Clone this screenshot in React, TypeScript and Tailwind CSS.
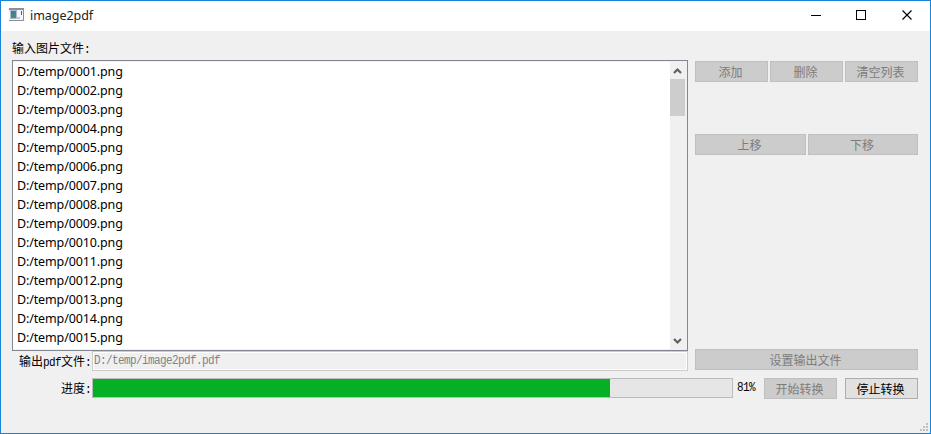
import React from "react";

const files = Array.from({ length: 15 }, (_, i) => `D:/temp/${String(i + 1).padStart(4, "0")}.png`);

function Button({ label, className, active = false }: { label: string; className: string; active?: boolean }) {
  return (
    <button
      className={`flex h-[21px] shrink-0 items-center justify-center border pt-[4px] pr-[2px] text-[12px] leading-none ${
        active ? "border-[#adadad] bg-[#e1e1e1] text-black" : "border-[#bfbfbf] bg-[#cccccc] text-[#7c7c7c]"
      } ${className}`}
    >
      <span>{label}</span>
    </button>
  );
}

function Latin({ children }: { children: string }) {
  return <span className="inline-block origin-center scale-y-[1.15] text-[11px] leading-none tracking-[-0.6px]">{children}</span>;
}

function TitleBar() {
  return (
    <header className="flex h-[30px] shrink-0 items-center bg-white">
      <svg className="mb-[3px] ml-2 shrink-0" width="15" height="13" viewBox="0 0 15 13" shapeRendering="crispEdges">
        <path d="M0 0h15v13H0z" fill="#8b9094" />
        <path d="M0 2h14v10H0z" fill="#f4f5f6" />
        <path d="M1 2h7v9H1z" fill="#a9bccb" />
        <path d="M2 3h5v7H2z" fill="#3f8d80" />
        <path d="M2 3h4v3H2z" fill="#4778a0" />
        <path d="M8 9h3v2H8z" fill="#c5c9cc" />
        <path d="M12 3h1v4h-1z" fill="#3c608c" />
      </svg>
      <h1 className="ml-[6px] font-['Noto_Sans',sans-serif] text-[12.5px] leading-none tracking-[-0.05px] text-[#222]">image2pdf</h1>
      <div className="ml-auto flex h-full items-center pr-[17px] text-black">
        <svg className="mb-[2px]" width="102" height="10" viewBox="0 0 102 10" fill="none" stroke="currentColor">
          <path d="M0 5.5h10M45.5.5h9v9h-9z" shapeRendering="crispEdges" />
          <path d="m91.5.5 9 9m0-9-9 9" strokeWidth="1.15" />
        </svg>
      </div>
    </header>
  );
}

function FileList() {
  return (
    <div className="flex h-[291px] border border-[#828790] bg-[#f0f0f0] py-px">
      <ul className="flex-1 overflow-hidden bg-white pl-1 font-['Noto_Sans',sans-serif] text-[12.5px] text-black">
        {files.map((file) => (
          <li key={file} className="h-[19px] leading-[19px] tracking-[-0.13px]">{file}</li>
        ))}
      </ul>
      <div className="mr-[2px] flex w-[15px] flex-col items-center text-[#606060]">
        <svg className="shrink-0" width="15" height="17" fill="none" stroke="currentColor" strokeWidth="2.2">
          <path d="m4 11 3.5-3.5L11 11" />
        </svg>
        <div className="h-[37px] w-full bg-[#cdcdcd]" />
        <svg className="mt-auto shrink-0" width="15" height="17" fill="none" stroke="currentColor" strokeWidth="2.2">
          <path d="m4 7 3.5 3.5L11 7" />
        </svg>
      </div>
    </div>
  );
}

export default function App() {
  return (
    <div className="flex h-[434px] w-[931px] flex-col overflow-hidden border border-[#1883d7] bg-[#f0f0f0] font-['Liberation_Mono','Noto_Sans_CJK_SC',monospace] text-[12px] text-black">
      <TitleBar />
      <main className="flex flex-col pr-3 pl-[11px]">
        <div className="flex justify-between">
          <section className="w-[676px]">
            <div className="h-[29px] pt-[10px] leading-[18px]">输入图片文件<Latin>:</Latin></div>
            <FileList />
            <div className="flex h-5">
              <label className="flex w-20 shrink-0 items-center justify-end pt-[3px] pr-[1px] leading-none">
                <span>输出<Latin>pdf</Latin>文件<Latin>:</Latin></span>
              </label>
              <div className="flex flex-1 items-center border border-[#cccccc] bg-[#f0f0f0] pt-px pl-px leading-none text-[#838383] shadow-[inset_0_0_0_1px_#ffffff]">
                <Latin>D:/temp/image2pdf.pdf</Latin>
              </div>
            </div>
          </section>
          <aside className="flex w-[223px] flex-col pt-[30px]">
            <div className="flex gap-[2px]">
              <Button label="添加" className="w-[73px]" />
              <Button label="删除" className="w-[73px]" />
              <Button label="清空列表" className="w-[73px]" />
            </div>
            <div className="mt-[52px] flex gap-[2px]">
              <Button label="上移" className="w-[111px]" />
              <Button label="下移" className="w-[110px]" />
            </div>
            <Button label="设置输出文件" className="mt-auto mb-px w-[223px]" />
          </aside>
        </div>
        <div className="mt-[7px] flex h-[21px]">
          <label className="flex w-20 shrink-0 items-center justify-end pt-[3px] pr-[1px] leading-none">
            <span>进度<Latin>:</Latin></span>
          </label>
          <div className="h-5 w-[641px] border border-[#bcbcbc] bg-[#e6e6e6]">
            <div className="h-full w-[517px] bg-[#06b025]" />
          </div>
          <span className="ml-1 w-[27px] leading-[20px]"><Latin>81%</Latin></span>
          <Button label="开始转换" className="w-[73px]" />
          <Button label="停止转换" className="ml-2 w-[73px]" active />
        </div>
      </main>
      <svg className="mt-auto mr-[2px] mb-[2px] self-end text-[#bfbfbf]" width="8" height="8" fill="currentColor" shapeRendering="crispEdges">
        <path d="M6 0h2v2H6zM3 3h2v2H3zM6 3h2v2H6zM0 6h2v2H0zM3 6h2v2H3zM6 6h2v2H6z" />
      </svg>
    </div>
  );
}
